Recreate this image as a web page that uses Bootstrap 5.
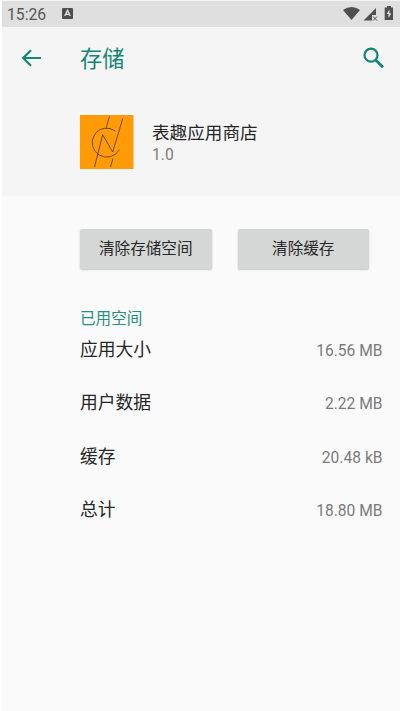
<!DOCTYPE html>
<html lang="zh-CN">
<head>
<meta charset="utf-8">
<meta name="viewport" content="width=device-width, initial-scale=1">
<title>存储</title>
<link href="https://cdn.jsdelivr.net/npm/bootstrap@5.3.0/dist/css/bootstrap.min.css" rel="stylesheet">
<style>
body{font-family:Roboto,"Noto Sans CJK SC",sans-serif;background:#fafafa;color:#272727;height:711px;overflow:hidden;border-left:2px solid #fefefe}
svg{display:block;flex:none}
.status-bar{height:27px;background:#dfdfdf;color:#565656;font-size:15.7px;line-height:26px;padding:0 7px 0 5px;border-top:1px solid #f4f4f4}
.clock{padding-top:1px}
.top-area{height:169px;background:#f5f5f5}
.app-bar{height:62px;padding:0 15px 0 19px}
.page-title{font-size:22.2px;line-height:30px;color:#128674;margin-left:38px;padding-top:2px}
.app-row{padding:26px 0 0 78px}
.app-text{margin-left:18px;padding-top:6px}
.app-name{font-size:17.6px;line-height:24px}
.app-version{font-size:15.6px;line-height:20px;color:#7b7b7b}
.actions{padding:33px 31px 0 78px;gap:26px}
.btn-clear{width:131.5px;height:40px;padding:1px 0 0;font-size:15.6px;line-height:39px;background:#d5d7d6;color:#272727;border:0;border-radius:2px;box-shadow:0 1px 2px rgba(0,0,0,.22)}
.usage{padding:39px 17.5px 0 78px}
.usage-title{font-size:15.6px;line-height:22px;color:#249080}
.usage-list{padding-top:6px}
.usage-row{height:53.3px;font-size:17.8px;line-height:28px}
.usage-value{font-size:15.6px;line-height:30px;color:#7b7b7b}
</style>
</head>
<body>
<div class="status-bar d-flex align-items-center">
  <span class="clock">15:26</span>
  <svg class="ms-3" width="11" height="12" viewBox="0 0 11 12"><rect width="11" height="11" rx="1" fill="#4f4f4f"/><path d="M2.800 8.100 5.500 2.300 8.200 8.100M3.800 6.400h3.400" fill="none" stroke="#e8e8e8" stroke-width="1.300"/></svg>
  <svg class="ms-auto" width="50" height="18" viewBox="0 0 50 18" fill="#505050">
    <path d="M0 5Q8.500-1 17 5L8.500 15z"/>
    <path d="M33 3v7h-4v5.500h-8.500z"/><path d="m30 11.500 4 4m0-4-4 4" stroke="#505050" stroke-width="1"/>
    <path d="M41.700 2.500H44V1h4v1.500h2V15h-8.300z"/><path d="m46.500 4.500-2.800 4.500h1.800v4l2.800-4.500h-1.800z" fill="#e2e2e2"/>
  </svg>
</div>
<header class="top-area">
  <div class="app-bar d-flex align-items-center">
    <svg width="21" height="18" viewBox="0 0 21 18" fill="none" stroke="#128674" stroke-width="2.200"><path d="M20 9H3M10 1.200 2.200 9l7.800 7.800"/></svg>
    <h1 class="page-title mb-0 fw-normal">存储</h1>
    <svg class="ms-auto" width="22" height="22" viewBox="0 0 22 22" fill="none" stroke="#128674"><circle cx="8" cy="8.200" r="6.500" stroke-width="2.200"/><path d="m12.700 13 7.300 7.300" stroke-width="2.800"/></svg>
  </div>
  <div class="app-row d-flex">
    <svg width="54" height="54" viewBox="0 0 54 54"><path fill="#ff9b06" d="M0 0h53.500v54H0z"/><g fill="none" stroke="#4c3512" stroke-width=".8"><path d="M29.500 1.500 26 13.500M42.700 3.700 32.700 37 22.700 19.700 14.500 52M33 43.500 30.500 52M35.300 16A14.500 14.500 0 1 0 39.300 34.800"/></g></svg>
    <div class="app-text">
      <div class="app-name">表趣应用商店</div>
      <div class="app-version">1.0</div>
    </div>
  </div>
</header>
<main>
  <div class="actions d-flex">
    <button class="btn btn-clear" type="button">清除存储空间</button>
    <button class="btn btn-clear" type="button">清除缓存</button>
  </div>
  <section class="usage">
    <h2 class="usage-title mb-0 fw-normal">已用空间</h2>
    <div class="usage-list">
      <div class="usage-row d-flex justify-content-between"><span>应用大小</span><span class="usage-value">16.56 MB</span></div>
      <div class="usage-row d-flex justify-content-between"><span>用户数据</span><span class="usage-value">2.22 MB</span></div>
      <div class="usage-row d-flex justify-content-between"><span>缓存</span><span class="usage-value">20.48 kB</span></div>
      <div class="usage-row d-flex justify-content-between"><span>总计</span><span class="usage-value">18.80 MB</span></div>
    </div>
  </section>
</main>
<script src="https://cdn.jsdelivr.net/npm/bootstrap@5.3.0/dist/js/bootstrap.bundle.min.js"></script>
</body>
</html>
